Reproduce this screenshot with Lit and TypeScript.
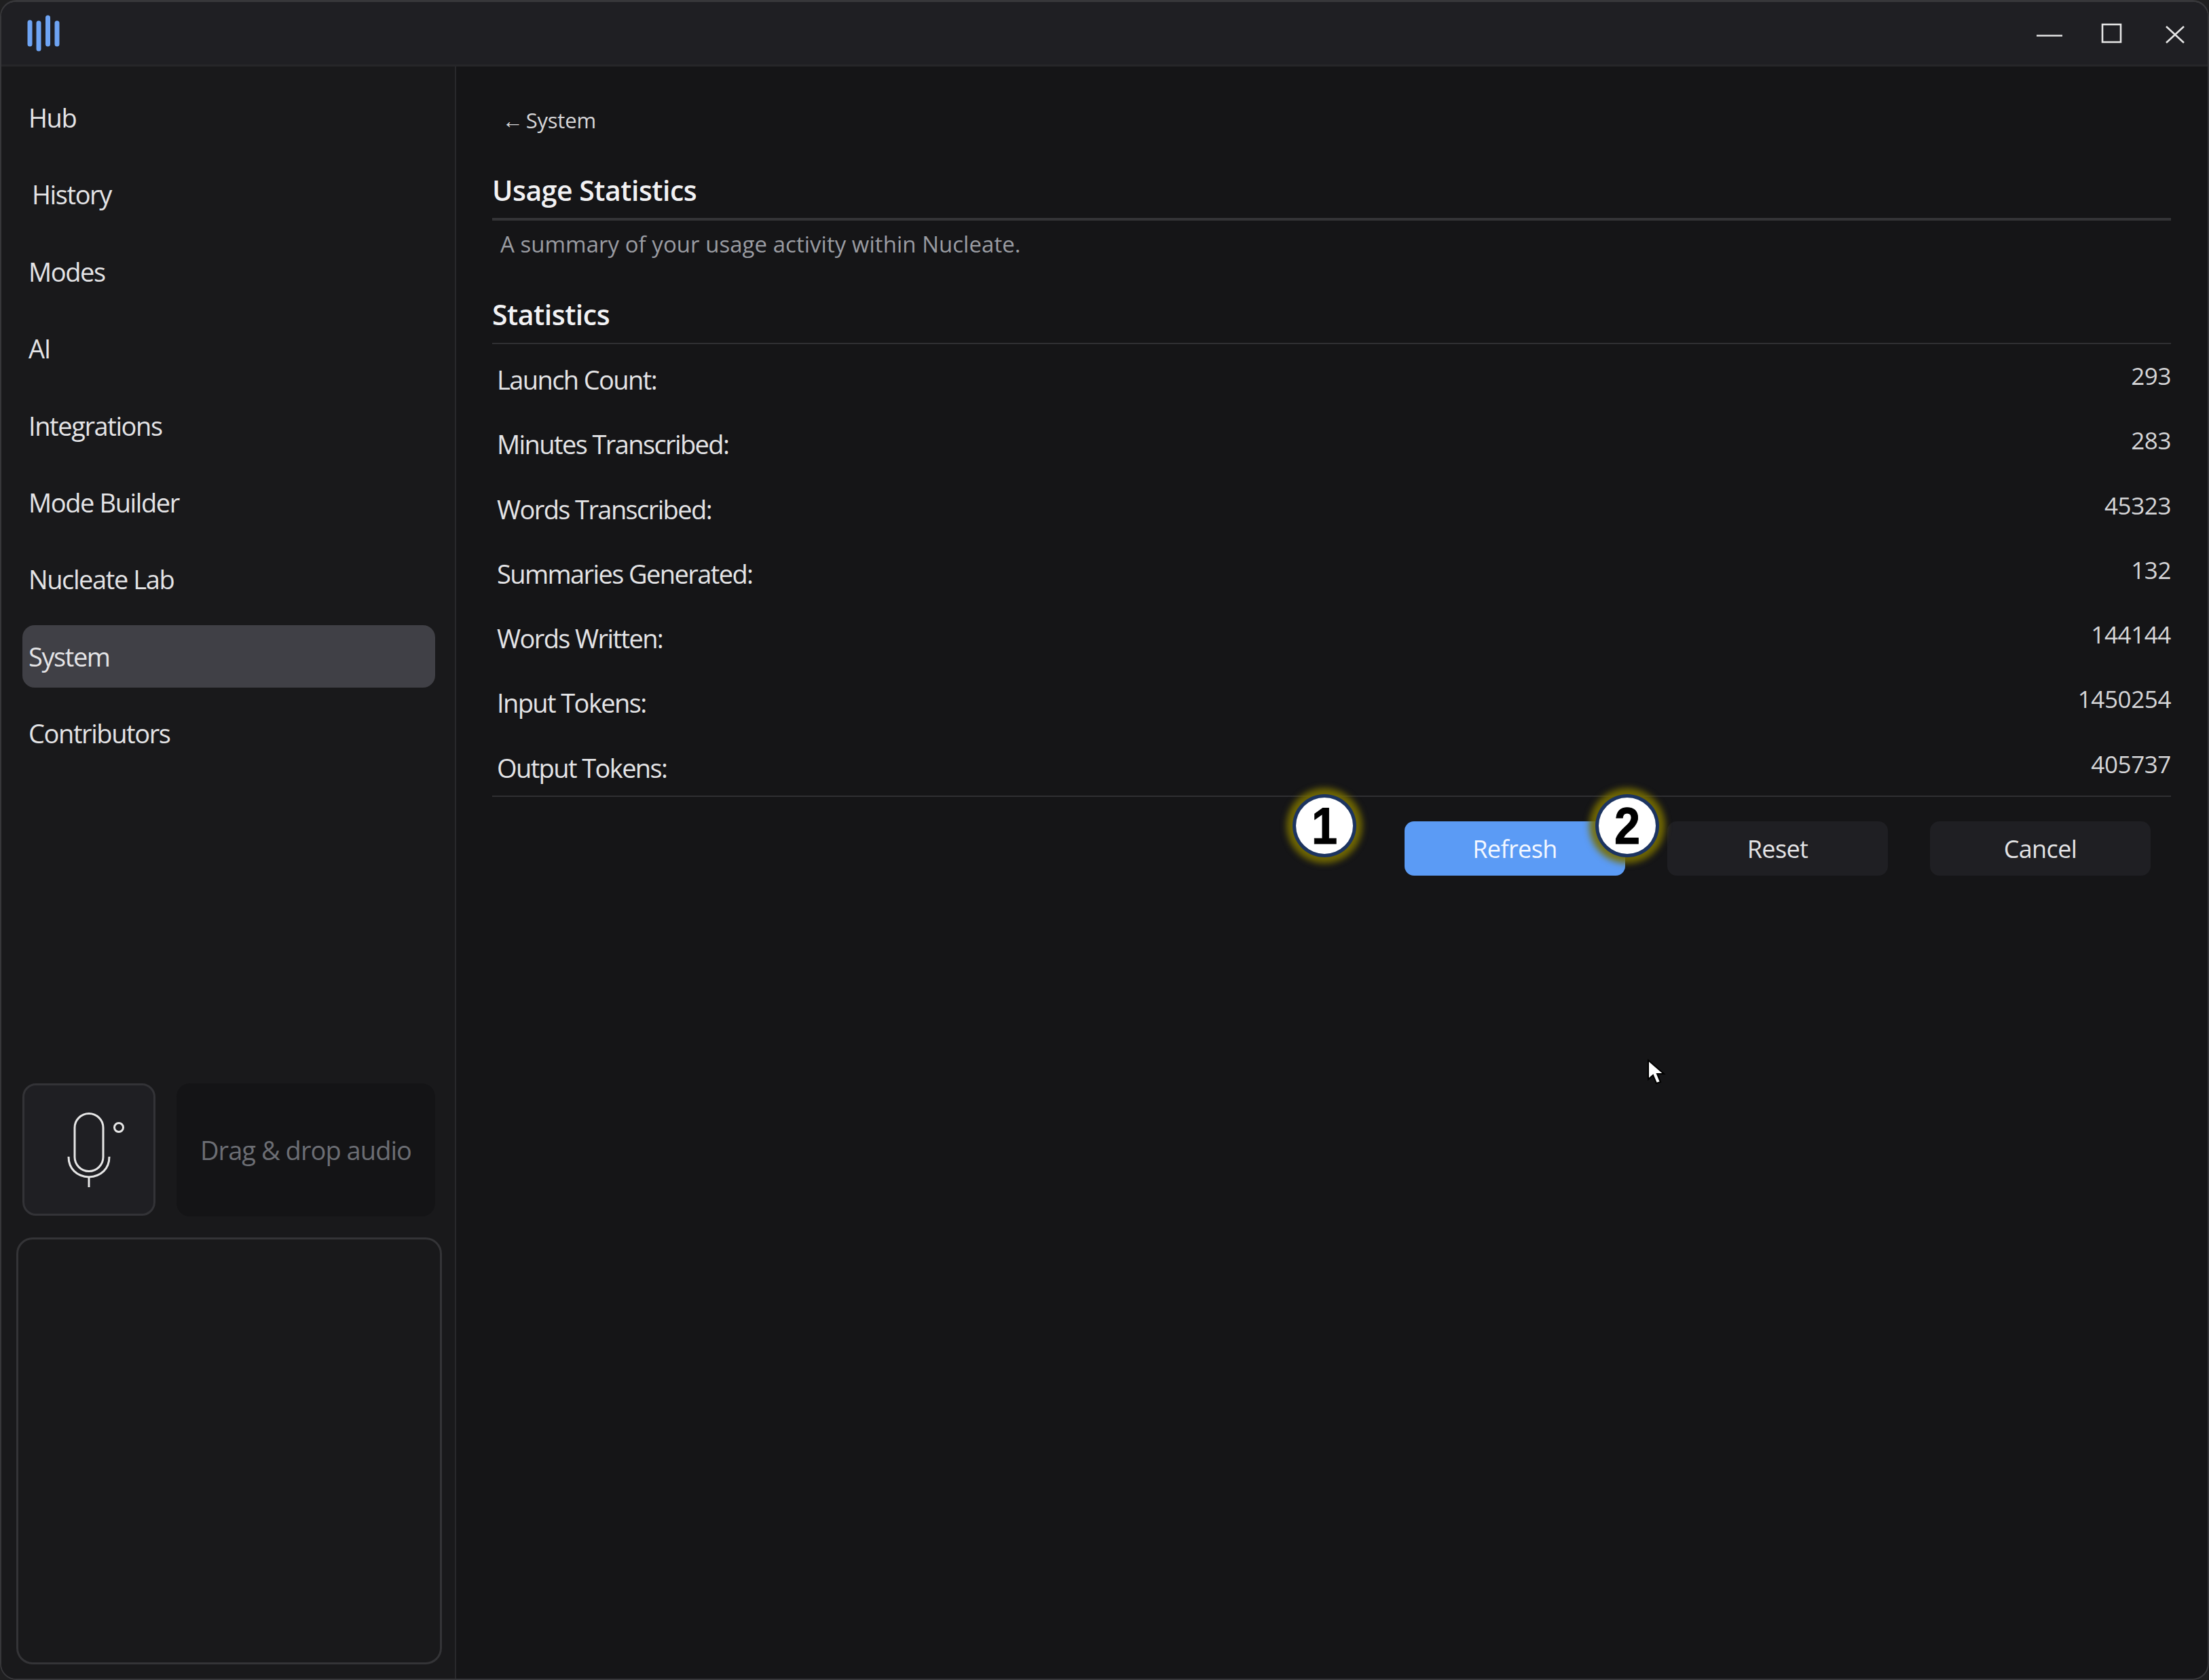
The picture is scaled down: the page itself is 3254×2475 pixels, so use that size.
import { LitElement, html, css } from "lit";
import { customElement } from "lit/decorators.js";

const NAV = ["Hub", "History", "Modes", "AI", "Integrations", "Mode Builder", "Nucleate Lab", "System", "Contributors"];
const LABELS = ["Launch Count:", "Minutes Transcribed:", "Words Transcribed:", "Summaries Generated:", "Words Written:", "Input Tokens:", "Output Tokens:"];
const VALUES = ["293", "283", "45323", "132", "144144", "1450254", "405737"];

@customElement("app-root")
export class AppRoot extends LitElement {
  static styles = css`
    :host { display: block; width: 3254px; height: 2475px; position: relative; overflow: hidden; background: #1f1f20;
      font-family: "Open Sans", "Noto Sans", sans-serif; color: #e6e6e8; }
    * { box-sizing: border-box; }
    .window { width: 3254px; height: 2475px; display: flex; flex-direction: column; border: 2px solid #37373a; border-top-width: 3px;
      border-radius: 24px; overflow: hidden; background: #151517; }
    .titlebar { height: 95px; flex: none; display: flex; align-items: center; justify-content: space-between; background: #1f1f23;
      border-bottom: 3px solid #262629; }
    .logo { margin-left: 35px; display: block; }
    .controls { display: flex; align-items: center; }
    .controls svg { display: block; }
    .body { flex: 1; display: flex; min-height: 0; }
    .sidebar { width: 670px; flex: none; background: #19191b; border-right: 2px solid #28282b; display: flex; flex-direction: column;
      padding: 29px 19px 21px 22px; }
    .nav { display: flex; flex-direction: column; gap: 21.4px; }
    .item { height: 92px; display: flex; align-items: center; padding-left: 9px; margin: 0 10px 0 9px; border-radius: 18px; font-size: 38px;
      letter-spacing: -1.4px; color: #e4e4e6; }
    .item.nudge { padding-left: 14px; }
    .item.active { background: #404046; }
    .drop { margin-top: auto; display: flex; gap: 31px; margin-left: 9px; margin-right: 10px; }
    .mic { width: 196px; height: 195px; flex: none; border: 3px solid #333337; border-radius: 20px; background: #1f1f23; display: flex;
      align-items: center; padding: 3px 0 0 63px; }
    .mic svg { display: block; }
    .dragbox { flex: 1; height: 196px; background: #141416; border-radius: 20px; display: flex; align-items: center; justify-content: center;
      font-size: 38px; letter-spacing: -0.95px; color: #6c6e74; }
    .panel { margin-top: 31px; height: 629px; border: 3px solid #343437; border-radius: 24px; background: #19191b; }
    .main { flex: 1; min-width: 0; padding: 54px 54px 0 53px; display: flex; flex-direction: column; }
    .back { height: 50px; line-height: 50px; padding-left: 15px; font-size: 31px; letter-spacing: -0.2px; word-spacing: -4px; color: #d6d6d8; }
    h1, h2 { margin: 0; font-weight: 600; color: #f2f2f4; letter-spacing: -0.5px; }
    h1 { margin-top: 48px; height: 75px; line-height: 60px; font-size: 41px; border-bottom: 4px solid #343437; }
    .desc { margin-top: 10px; height: 50px; line-height: 50px; padding-left: 12px; font-size: 33px; letter-spacing: 0.03px; color: #9a9ca2; }
    h2 { margin-top: 48px; height: 74px; line-height: 60px; font-size: 41px; border-bottom: 2px solid #2f2f32; }
    .stats { display: flex; justify-content: space-between; height: 667px; border-bottom: 2px solid #2f2f32; }
    .col { display: flex; flex-direction: column; gap: 45.3px; }
    .col.labels { padding: 27px 0 0 7px; font-size: 38px; letter-spacing: -1.6px; color: #e4e4e6; }
    .col.values { padding-top: 22px; align-items: flex-end; font-size: 35px; letter-spacing: -0.4px; color: #d6d6d8; }
    .col div { height: 50px; line-height: 50px; }
    .actions { margin-top: 36px; display: flex; justify-content: flex-end; gap: 62px; padding-right: 30px; }
    .btn { width: 325px; height: 80px; border-radius: 14px; background: #1f1f23; display: flex; align-items: center; justify-content: center;
      font-size: 36px; letter-spacing: -0.6px; color: #e4e4e6; }
    .btn.primary { background: #5b9bf5; color: #f4f8ff; }
    .badge { position: absolute; top: 1170px; width: 94px; height: 93px; border-radius: 50%; background: #fff; border: 5px solid #1c3460;
      box-shadow: 0 0 10px 9px rgba(120, 110, 0, 0.9); display: flex; align-items: center; justify-content: center;
      font-family: "Liberation Sans", Arial, sans-serif; font-weight: 700; font-size: 76px; color: #000; line-height: 1; }
    .badge span { display: block; transform: scaleX(0.9); -webkit-text-stroke: 1px #000; }
    .b1 { left: 1904px; }
    .b2 { left: 2350px; }
    .cursor { position: absolute; left: 2425px; top: 1559px; display: block; }
  `;

  render() {
    return html`
      <div class="window">
        <div class="titlebar">
          <svg class="logo" width="56" height="60" viewBox="0 0 56 60" aria-hidden="true">
            <g stroke="#6ea4f4" stroke-width="7" stroke-linecap="round">
              <line x1="7" y1="14" x2="7" y2="46"></line>
              <line x1="20" y1="15" x2="20" y2="53"></line>
              <line x1="33.5" y1="7" x2="33.5" y2="46"></line>
              <line x1="47" y1="15" x2="47" y2="46"></line>
            </g>
          </svg>
          <div class="controls">
            <svg width="252" height="92" viewBox="0 0 252 92" aria-hidden="true">
              <g fill="none" stroke="#e6e6e6" stroke-width="2.6">
                <line x1="0" y1="49.5" x2="38" y2="49.5"></line>
                <rect x="97" y="33" width="27" height="26"></rect>
                <line x1="191" y1="36" x2="217" y2="60"></line>
                <line x1="217" y1="36" x2="191" y2="60"></line>
              </g>
            </svg>
          </div>
        </div>
        <div class="body">
          <aside class="sidebar">
            <nav class="nav">
              ${NAV.map(
                (n) => html`<div class="item ${n === "System" ? "active" : ""} ${n === "History" ? "nudge" : ""}">${n}</div>`
              )}
            </nav>
            <div class="drop">
              <div class="mic">
                <svg width="90" height="112" viewBox="0 0 90 112" aria-hidden="true">
                  <g fill="none" stroke="#e6e6e6" stroke-width="3">
                    <rect x="11" y="1.5" width="42" height="85" rx="21" ry="21"></rect>
                    <path d="M2 65 C2 83 14 94 32 95 C50 94 62 83 62 65"></path>
                    <line x1="32" y1="95" x2="32" y2="110"></line>
                    <circle cx="76" cy="22" r="6.5"></circle>
                  </g>
                </svg>
              </div>
              <div class="dragbox">Drag &amp; drop audio</div>
            </div>
            <div class="panel"></div>
          </aside>
          <main class="main">
            <div class="back">← System</div>
            <h1>Usage Statistics</h1>
            <div class="desc">A summary of your usage activity within Nucleate.</div>
            <h2>Statistics</h2>
            <div class="stats">
              <div class="col labels">${LABELS.map((l) => html`<div>${l}</div>`)}</div>
              <div class="col values">${VALUES.map((v) => html`<div>${v}</div>`)}</div>
            </div>
            <div class="actions">
              <div class="btn primary">Refresh</div>
              <div class="btn">Reset</div>
              <div class="btn">Cancel</div>
            </div>
          </main>
        </div>
      </div>
      <div class="badge b1"><span>1</span></div>
      <div class="badge b2"><span>2</span></div>
      <svg class="cursor" width="30" height="42" viewBox="0 0 30 42" aria-hidden="true">
        <path d="M3 3 L3 31 L10 25 L15 37 L21 35 L16 23 L26 23 Z" fill="#fff" stroke="#000" stroke-width="2"></path>
      </svg>
    `;
  }
}
